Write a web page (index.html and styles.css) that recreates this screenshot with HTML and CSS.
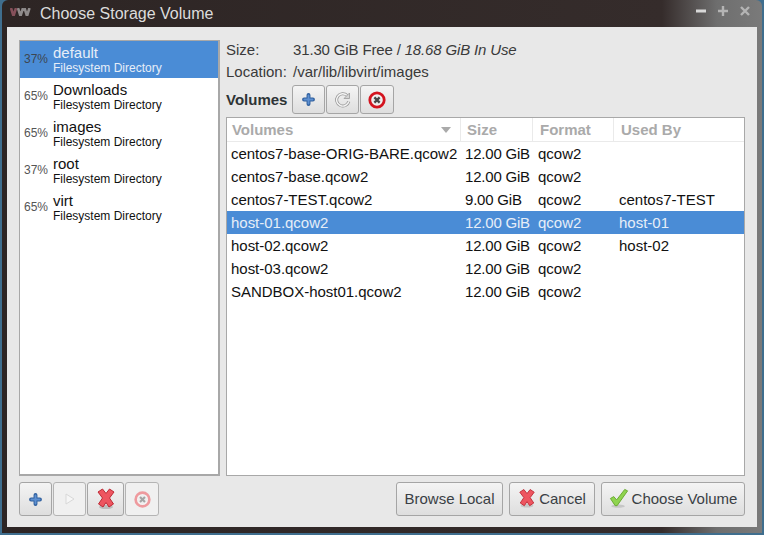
FILE: index.html
```html
<!DOCTYPE html>
<html lang="en">
<head>
    <meta charset="UTF-8">
    <title>Choose Storage Volume</title>
    <link rel="stylesheet" href="styles.css">
</head>
<body>
    <div class="window">
        <div class="titlebar">
            <svg class="app-icon" width="22" height="8" viewBox="0 0 22 8">
                <path d="M8 0l2.500 8L13 0M14.500 0l2.500 8 2.500-8" fill="none" stroke="#8f8b8b" stroke-width="2.600"/>
                <path d="M1 0l2.500 8L6 0" fill="none" stroke="#85505a" stroke-width="2.600"/>
            </svg>
            <span class="title">Choose Storage Volume</span>
            <div class="window-controls">
                <span class="wc">
                    <svg width="12" height="12" viewBox="0 0 12 12"><path d="M1 6h10" stroke="#d8d8d8" stroke-width="3"/></svg>
                </span>
                <span class="wc">
                    <svg width="12" height="12" viewBox="0 0 12 12"><path d="M1 6h10M6 1v10" stroke="#b4b4b4" stroke-width="2.400"/></svg>
                </span>
                <span class="wc">
                    <svg width="12" height="12" viewBox="0 0 12 12"><path d="M2 2l8 8M10 2l-8 8" stroke="#b4b4b4" stroke-width="2.400"/></svg>
                </span>
            </div>
        </div>
        <div class="client">
            <div class="main">
                <div class="pools">
                    <div class="pool selected">
                        <span class="pct">37%</span>
                        <div class="pool-text"><div class="pool-name">default</div><div class="pool-type">Filesystem Directory</div></div>
                    </div>
                    <div class="pool">
                        <span class="pct">65%</span>
                        <div class="pool-text"><div class="pool-name">Downloads</div><div class="pool-type">Filesystem Directory</div></div>
                    </div>
                    <div class="pool">
                        <span class="pct">65%</span>
                        <div class="pool-text"><div class="pool-name">images</div><div class="pool-type">Filesystem Directory</div></div>
                    </div>
                    <div class="pool">
                        <span class="pct">37%</span>
                        <div class="pool-text"><div class="pool-name">root</div><div class="pool-type">Filesystem Directory</div></div>
                    </div>
                    <div class="pool">
                        <span class="pct">65%</span>
                        <div class="pool-text"><div class="pool-name">virt</div><div class="pool-type">Filesystem Directory</div></div>
                    </div>
                </div>
                <div class="details">
                    <div class="info-row">
                        <span class="info-label">Size:</span>
                        <span class="info-value">31.30 GiB Free / <em>18.68 GiB In Use</em></span>
                    </div>
                    <div class="info-row">
                        <span class="info-label">Location:</span>
                        <span>/var/lib/libvirt/images</span>
                    </div>
                    <div class="vol-toolbar">
                        <strong class="vol-heading">Volumes</strong>
                        <div class="btn-group">
                            <button class="btn icon-btn">
                                <svg width="13" height="13" viewBox="0 0 16 16"><path d="M8 2.500v11M2.500 8h11" stroke="#2f5f9e" stroke-width="4.800" stroke-linecap="round"/><path d="M8 3v10M3 8h10" stroke="#5d8fd0" stroke-width="2.400" stroke-linecap="round"/></svg>
                            </button>
                            <button class="btn icon-btn">
                                <svg width="18" height="18" viewBox="0 0 18 18"><path d="M14.800 10.500a6.200 6.200 0 1 1-1.600-6" fill="none" stroke="#999" stroke-width="3"/><path d="M14.800 10.500a6.200 6.200 0 1 1-1.600-6" fill="none" stroke="#f4f4f4" stroke-width="1.400"/><path d="M15.500 2v5.500H10z" fill="#d4d4d4" stroke="#999" stroke-width=".8"/></svg>
                            </button>
                            <button class="btn icon-btn last">
                                <svg width="20" height="20" viewBox="0 0 20 20"><circle cx="10" cy="10" r="7.200" fill="#f4f4f4" stroke="#d3141f" stroke-width="2.800"/><circle cx="10" cy="10" r="4.600" fill="#e9e9e9"/><path d="M7.400 7.400l5.200 5.200M12.600 7.400l-5.200 5.200" stroke="#454545" stroke-width="2.200"/></svg>
                            </button>
                        </div>
                    </div>
                    <div class="volumes">
                        <div class="vol-row vol-head">
                            <div class="cell col-name">Volumes<span class="sort-arrow"></span></div>
                            <div class="cell col-size">Size</div>
                            <div class="cell col-format">Format</div>
                            <div class="cell col-used">Used By</div>
                        </div>
                        <div class="vol-row">
                            <div class="cell col-name">centos7-base-ORIG-BARE.qcow2</div>
                            <div class="cell col-size">12.00 GiB</div>
                            <div class="cell col-format">qcow2</div>
                            <div class="cell col-used"></div>
                        </div>
                        <div class="vol-row">
                            <div class="cell col-name">centos7-base.qcow2</div>
                            <div class="cell col-size">12.00 GiB</div>
                            <div class="cell col-format">qcow2</div>
                            <div class="cell col-used"></div>
                        </div>
                        <div class="vol-row">
                            <div class="cell col-name">centos7-TEST.qcow2</div>
                            <div class="cell col-size">9.00 GiB</div>
                            <div class="cell col-format">qcow2</div>
                            <div class="cell col-used">centos7-TEST</div>
                        </div>
                        <div class="vol-row selected">
                            <div class="cell col-name">host-01.qcow2</div>
                            <div class="cell col-size">12.00 GiB</div>
                            <div class="cell col-format">qcow2</div>
                            <div class="cell col-used">host-01</div>
                        </div>
                        <div class="vol-row">
                            <div class="cell col-name">host-02.qcow2</div>
                            <div class="cell col-size">12.00 GiB</div>
                            <div class="cell col-format">qcow2</div>
                            <div class="cell col-used">host-02</div>
                        </div>
                        <div class="vol-row">
                            <div class="cell col-name">host-03.qcow2</div>
                            <div class="cell col-size">12.00 GiB</div>
                            <div class="cell col-format">qcow2</div>
                            <div class="cell col-used"></div>
                        </div>
                        <div class="vol-row">
                            <div class="cell col-name">SANDBOX-host01.qcow2</div>
                            <div class="cell col-size">12.00 GiB</div>
                            <div class="cell col-format">qcow2</div>
                            <div class="cell col-used"></div>
                        </div>
                    </div>
                </div>
            </div>
            <div class="footer">
                <div class="btn-group pool-actions">
                    <button class="btn icon-btn">
                        <svg width="13" height="13" viewBox="0 0 16 16"><path d="M8 2.500v11M2.500 8h11" stroke="#2f5f9e" stroke-width="4.800" stroke-linecap="round"/><path d="M8 3v10M3 8h10" stroke="#5d8fd0" stroke-width="2.400" stroke-linecap="round"/></svg>
                    </button>
                    <button class="btn icon-btn disabled">
                        <svg width="12" height="14" viewBox="0 0 12 14"><path d="M2 2l8 5-8 5z" fill="#f6f6f6" stroke="#d8d8d8" stroke-width="1"/></svg>
                    </button>
                    <button class="btn icon-btn wide">
                        <svg width="20" height="22" viewBox="0 0 20 22"><ellipse cx="10" cy="19" rx="7" ry="2" fill="#bdbdbd"/><path d="M2 4L6.500 1 10 5.500 13.500 1 18 4 13.500 10 17.500 16 13 19 10 14.500 7 19 2.500 16 6.500 10z" fill="#ee5560" stroke="#bd2a35" stroke-width="1"/></svg>
                    </button>
                    <button class="btn icon-btn disabled last">
                        <svg width="19" height="19" viewBox="0 0 20 20"><circle cx="10" cy="10" r="7.200" fill="#f4f4f4" stroke="#ee9a9e" stroke-width="2.800"/><circle cx="10" cy="10" r="4.600" fill="#eeeeee"/><path d="M7.400 7.400l5.200 5.200M12.600 7.400l-5.200 5.200" stroke="#a4a4a4" stroke-width="2.200"/></svg>
                    </button>
                </div>
                <div class="dialog-actions">
                    <button class="btn text-btn browse">Browse Local</button>
                    <button class="btn text-btn cancel">
                        <svg width="18" height="21" viewBox="0 0 20 22"><ellipse cx="10" cy="19" rx="7" ry="2" fill="#c6c6c6"/><path d="M2 4L6.500 1 10 5.500 13.500 1 18 4 13.500 10 17.500 16 13 19 10 14.500 7 19 2.500 16 6.500 10z" fill="#ee5560" stroke="#bd2a35" stroke-width="1"/></svg>
                        Cancel
                    </button>
                    <button class="btn text-btn choose">
                        <svg width="20" height="21" viewBox="0 0 20 22"><ellipse cx="9" cy="19" rx="7" ry="1.800" fill="#c6c6c6"/><path d="M1 11l3.500-2 3 3.500L16 1.500l3 1.500L8 18.500H6z" fill="#8fd44f" stroke="#68a82f" stroke-width="1"/></svg>
                        Choose Volume
                    </button>
                </div>
            </div>
        </div>
    </div>
</body>
</html>
```

FILE: styles.css
```css
html, body {
    height: 100%;
}

body {
    margin: 0;
    overflow: hidden;
    font-family: "Liberation Sans", Arial, sans-serif;
    font-size: 15px;
    color: #222;
    background-color: #3f6e8e; /* desktop peeking round the window */
}

.window {
    width: 760px;
    height: 533px;
    margin-left: 2px;
    display: flex;
    flex-direction: column;
    box-sizing: border-box;
    padding: 0 5px 6px 5px;
    border-radius: 6px 6px 0 0;
    background: linear-gradient(to right, #2d2524 0, #352c2b 660px, #6e6e6e 715px, #7a7a7a 100%);
}

.titlebar {
    height: 27px;
    flex: none;
    display: flex;
    align-items: center;
    color: #dcdcdc;
}

.app-icon {
    margin-left: 3px;
    margin-right: 8px;
    margin-bottom: 3px;
}

.title {
    font-size: 16px;
}

.window-controls {
    margin-left: auto;
    margin-right: 6px;
    margin-bottom: 5px;
    display: flex;
    gap: 10px;
}

.wc {
    width: 12px;
    height: 12px;
    display: flex;
}

.client {
    flex: 1;
    min-height: 0;
    display: flex;
    flex-direction: column;
    padding: 13px 12px 11px 12px;
    background-color: #e8e8e8;
}

.main {
    flex: 1;
    min-height: 0;
    display: flex;
    gap: 6px;
}

/* Storage pool list */
.pools {
    width: 201px;
    flex: none;
    box-sizing: border-box;
    border: 2px solid #a8a8a8;
    border-width: 1px 2px 2px 1px;
    background-color: #fff;
}

.pool {
    height: 37px;
    display: flex;
    align-items: center;
    color: #111;
}

.pool.selected {
    background-color: #4a8cd6;
    color: #e6eef8;
}

.pct {
    width: 33px;
    flex: none;
    box-sizing: border-box;
    padding-left: 4px;
    margin-bottom: 2px;
    font-size: 12px;
    color: #555;
}

.pool.selected .pct {
    color: #3d4650;
}

.pool-name {
    font-size: 15px;
    line-height: 16px;
}

.pool-type {
    font-size: 12px;
    line-height: 14px;
}

/* Right side */
.details {
    flex: 1;
    min-width: 0;
    display: flex;
    flex-direction: column;
}

.info-row {
    height: 22px;
    margin-top: -2px;
    display: flex;
    align-items: center;
    color: #3a3a3a;
}

.info-row + .info-row {
    margin-top: 0;
}

.info-label {
    width: 67px;
    flex: none;
}

.info-value {
    letter-spacing: -0.15px;
}

.vol-toolbar {
    height: 29px;
    margin-top: 3px;
    display: flex;
    align-items: center;
    gap: 5px;
}

.vol-heading {
    color: #2e3436;
}

.btn-group {
    display: flex;
    gap: 1px;
}

.btn {
    margin: 0;
    padding: 0;
    box-sizing: border-box;
    display: flex;
    align-items: center;
    justify-content: center;
    font-family: inherit;
    font-size: 15px;
    color: #3a3f45;
    border: 1px solid #a5a5a5;
    border-radius: 3px;
    background: linear-gradient(to bottom, #f4f4f4, #dedede);
}

.btn.disabled {
    background: #f0f0f0;
    border-color: #b4b4b4;
}

.vol-toolbar .icon-btn {
    width: 33px;
    height: 29px;
}

.vol-toolbar .icon-btn.last {
    width: 34px;
}

.volumes {
    flex: 1;
    min-height: 0;
    margin-top: 3px;
    box-sizing: border-box;
    border: 1px solid #a8a8a8;
    background-color: #fff;
}

.vol-row {
    height: 23px;
    display: flex;
    color: #111;
}

.vol-row.selected {
    background-color: #4a8cd6;
    color: #e6eef8;
}

.vol-head {
    height: 24px;
    color: #aaa;
    font-weight: bold;
    border-bottom: 1px solid #eaeaea;
    box-sizing: border-box;
}

.cell {
    display: flex;
    align-items: center;
    box-sizing: border-box;
    padding-left: 4px;
    white-space: nowrap;
}

.vol-head .cell {
    border-right: 1px solid #eaeaea;
    padding-left: 5px;
}

.col-name { width: 234px; letter-spacing: -0.02px; }
.col-size { width: 72px; }
.col-format { width: 81px; }
.col-used { flex: 1; }

.vol-row:not(.vol-head) .col-size {
    letter-spacing: -0.2px;
}

.vol-row:not(.vol-head) .col-format {
    padding-left: 5px;
}

.vol-row:not(.vol-head) .col-used {
    padding-left: 5px;
}

.vol-head .col-size { padding-left: 6px; }
.vol-head .col-format { padding-left: 7px; }
.vol-head .col-used { padding-left: 7px; border-right: 0; }

.sort-arrow {
    margin-left: auto;
    margin-right: 9px;
    border-style: solid;
    border-width: 6px 5px 0 5px;
    border-color: #aaa transparent transparent transparent;
}

/* Bottom buttons */
.footer {
    height: 34px;
    flex: none;
    margin-top: 6px;
    display: flex;
    justify-content: space-between;
}

.pool-actions .icon-btn {
    width: 33px;
    height: 34px;
}

.pool-actions .icon-btn.wide {
    width: 37px;
}

.pool-actions .icon-btn.last {
    width: 34px;
}

.dialog-actions {
    display: flex;
    gap: 6px;
}

.text-btn {
    height: 34px;
    gap: 3px;
    padding-bottom: 2px;
}

.browse { width: 107px; }
.cancel { width: 86px; }
.choose { width: 144px; }
```
